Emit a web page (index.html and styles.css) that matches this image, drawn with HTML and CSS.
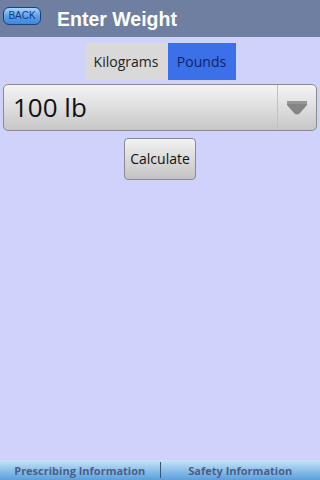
FILE: index.html
```html
<!DOCTYPE html>
<html lang="en">
<head>
    <meta charset="UTF-8">
    <title>Enter Weight</title>
    <link rel="stylesheet" href="styles.css">
</head>
<body>
<div class="top">
    <div class="back">BACK</div>
    <div class="title">Enter Weight</div>
</div>
<div class="main">
    <div class="units">
        <div class="unit">Kilograms</div>
        <div class="unit on">Pounds</div>
    </div>
    <div class="spinner">
        <div class="value">100 lb</div>
        <div class="arrow">
            <svg width="22" height="20" viewBox="0 0 22 20">
                <path d="M1 3 L21 3 L21 7 L14 15 Q11 18 8 15 L1 7 Z" fill="#858585"/>
                <rect x="1" y="3" width="20" height="3" fill="#969696"/>
            </svg>
        </div>
    </div>
    <div class="calc">Calculate</div>
</div>
<div class="bottom">
    <div class="tab">Prescribing Information</div>
    <div class="sep"></div>
    <div class="tab">Safety Information</div>
</div>
</body>
</html>
```

FILE: styles.css
```css
html,body{
    height:100%;
}
*{
    box-sizing: border-box;
}
body{
    margin:0;
    padding:0;
    display: flex;
    flex-direction: column;
    background: #cfd3fb;
    font-family: "Open Sans", "Liberation Sans", sans-serif;
}
.top{
    height:37px;
    background: #6f7fa1;
    display: flex;
    align-items: center;
    padding-left:3px;
}
.back{
    width:38px;
    height:18px;
    margin-top:-6px;
    border:1px solid #1d3f78;
    border-radius: 6px;
    background: linear-gradient(#a9d4fb, #5aa2ec 50%, #3d86dd);
    color: #1a3a7a;
    font-size: 10px;
    text-align: center;
    line-height: 16px;
    font-family: "Liberation Sans", sans-serif;
}
.title{
    margin-left:16px;
    margin-top:1px;
    color: #fff;
    font-size: 19.5px;
    font-weight: bold;
    font-family: "Liberation Sans", sans-serif;
}
.main{
    flex-grow: 1;
    display: flex;
    flex-direction: column;
    align-items: center;
    padding:6px 3px 0;
}
.units{
    display: flex;
    height:37px;
}
.unit{
    width:83px;
    background: #d9d9d9;
    color: #222;
    font-size: 14px;
    line-height: 37px;
    text-align: center;
}
.unit.on{
    width:68px;
    background: #3c70e9;
    color: #0f2466;
}
.spinner{
    width:100%;
    height:47px;
    margin-top:4px;
    border:1px solid #8a8a8a;
    border-radius: 5px;
    background: linear-gradient(#f4f4f4, #dcdcdc 55%, #c6c6c6);
    display: flex;
}
.value{
    flex-grow: 1;
    padding-left:9px;
    font-size: 26px;
    line-height: 44px;
    color: #111;
}
.arrow{
    width:39px;
    border-left:1px solid #c2c2c2;
    display: flex;
    align-items: center;
    justify-content: center;
}
.calc{
    margin-top:7px;
    width:72px;
    height:42px;
    border:1px solid #8a8a8a;
    border-radius: 4px;
    background: linear-gradient(#f2f2f2, #d8d8d8 55%, #c4c4c4);
    font-size: 14px;
    color: #111;
    line-height: 40px;
    text-align: center;
}
.bottom{
    height:20px;
    display: flex;
    align-items: center;
    background: linear-gradient(#c9e4f8, #8fc1ec 50%, #5b9fdc);
}
.tab{
    flex:1;
    text-align: center;
    font-size: 11px;
    font-weight: bold;
    color: #4a5f86;
}
.sep{
    width:1px;
    height:16px;
    background: #35557f;
}
```
